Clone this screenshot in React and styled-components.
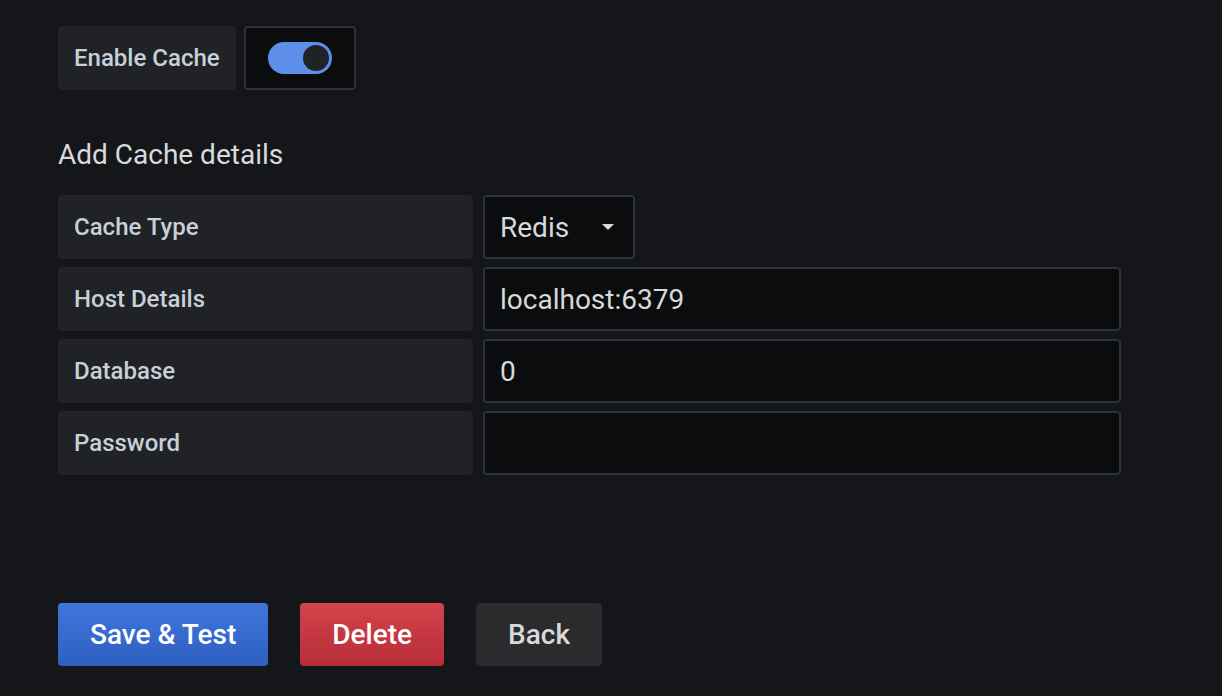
import React from 'react'
import styled, { createGlobalStyle } from 'styled-components'

const GlobalStyle = createGlobalStyle`
  html, body {
    margin: 0;
    background: #141619;
  }
  body {
    font-family: Roboto, 'Liberation Sans', sans-serif;
  }
`

const fields = [
  { label: 'Host Details', value: 'localhost:6379' },
  { label: 'Database', value: '0' },
  { label: 'Password', value: '' },
]

const App = () => (
  <Page>
    <GlobalStyle />
    <Row>
      <Label>Enable Cache</Label>
      <SwitchBox>
        <Track>
          <Knob />
        </Track>
      </SwitchBox>
    </Row>

    <Heading>Add Cache details</Heading>

    <Rows>
      <Row>
        <Label wide>Cache Type</Label>
        <Select>
          <span>Redis</span>
          <Caret />
        </Select>
      </Row>
      {fields.map(f => (
        <Row key={f.label}>
          <Label wide>{f.label}</Label>
          <Input>{f.value}</Input>
        </Row>
      ))}
    </Rows>

    <Actions>
      <Button variant='primary'>Save &amp; Test</Button>
      <Button variant='danger'>Delete</Button>
      <Button>Back</Button>
    </Actions>
  </Page>
)

const Page = styled.div`
  padding: 26px 0 0 58px;
  height: 666px;
  box-sizing: border-box;
  display: flex;
  flex-direction: column;
`

const Rows = styled.div`
  display: flex;
  flex-direction: column;
  gap: 8px;
`

const Row = styled.div`
  display: flex;
  gap: 8px;
  height: 64px;
`

const Label = styled.div`
  box-sizing: border-box;
  width: ${p => (p.wide ? '415px' : '178px')};
  margin-right: ${p => (p.wide ? '2px' : '0')};
  height: 64px;
  background: #202226;
  border-radius: 4px;
  padding: 0 16px;
  display: flex;
  align-items: center;
  color: #c7d0d9;
  font-size: 24px;
  font-weight: 500;
`

const SwitchBox = styled.div`
  box-sizing: border-box;
  width: 112px;
  height: 64px;
  background: #0b0c0e;
  border: 2px solid #2c3235;
  border-radius: 4px;
  display: flex;
  align-items: center;
  justify-content: center;
`

const Track = styled.div`
  position: relative;
  width: 64px;
  height: 32px;
  border-radius: 16px;
  background: #5d8fe8;
`

const Knob = styled.div`
  position: absolute;
  top: 3px;
  right: 3px;
  width: 26px;
  height: 26px;
  border-radius: 50%;
  background: #202226;
`

const Heading = styled.h2`
  margin: 49px 0 24px;
  color: #d8d9da;
  font-size: 28px;
  font-weight: 400;
  line-height: 32px;
`

const fieldBox = `
  box-sizing: border-box;
  height: 64px;
  background: #0b0c0e;
  border: 2px solid #2c3235;
  border-radius: 4px;
  padding: 0 15px;
  display: flex;
  align-items: center;
  color: #d8d9da;
  font-size: 28px;
`

const Select = styled.div`
  ${fieldBox}
  width: 152px;
  justify-content: space-between;
`

const Caret = styled.span`
  width: 0;
  height: 0;
  border-left: 6px solid transparent;
  border-right: 6px solid transparent;
  border-top: 6px solid #d8d9da;
  margin-right: 4px;
`

const Input = styled.div`
  ${fieldBox}
  width: 638px;
`

const Actions = styled.div`
  margin-top: auto;
  display: flex;
  gap: 32px;
`

const variants = {
  primary: 'background: linear-gradient(#3f76dc, #2f5fc0); color: #fff;',
  danger: 'background: linear-gradient(#d4434c, #b72d37); color: #fff;',
  default: 'background: #2b2b2e; color: #d8d9da;',
}

const Button = styled.button`
  height: 63px;
  padding: 0 32px;
  border: none;
  border-radius: 4px;
  font-family: Roboto, 'Liberation Sans', sans-serif;
  font-size: 28px;
  font-weight: 500;
  ${p => variants[p.variant || 'default']}
`

export default App
